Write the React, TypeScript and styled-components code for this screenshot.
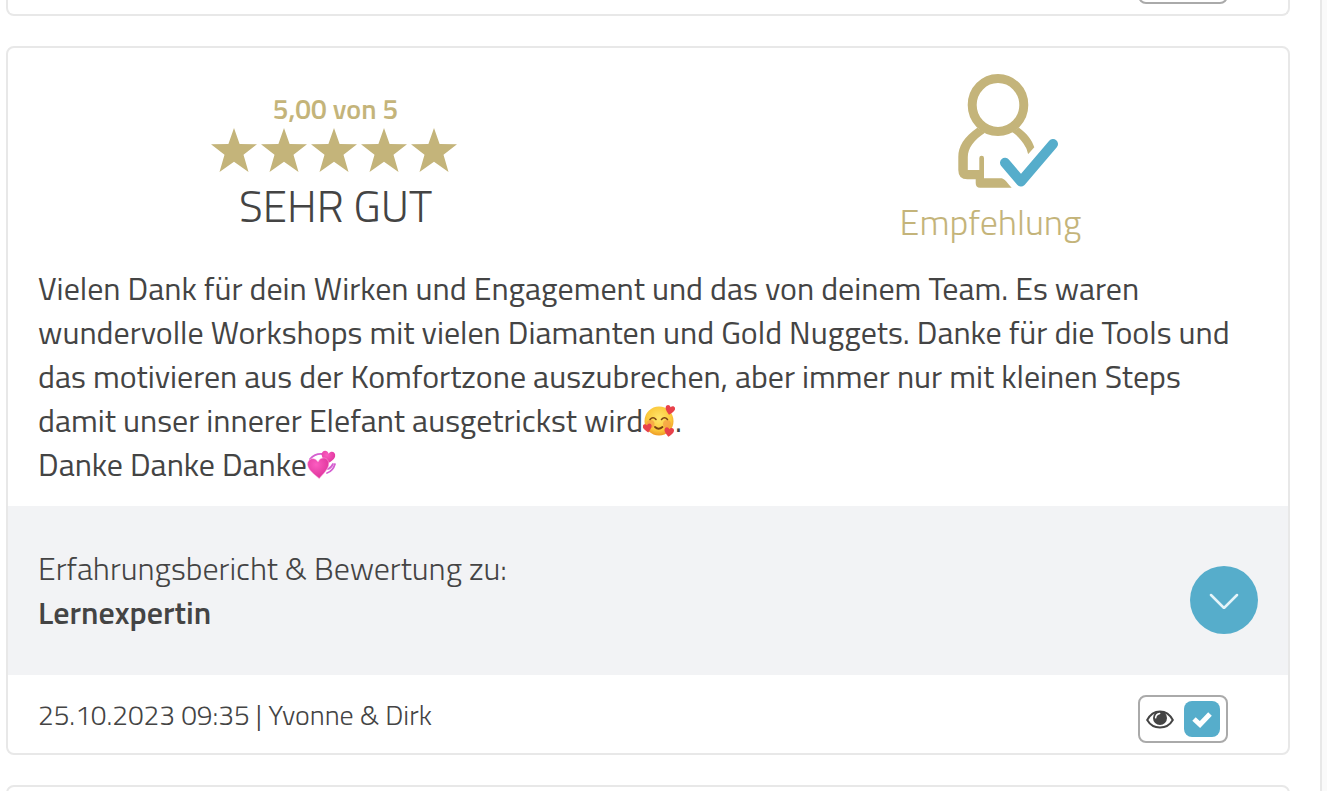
import React from "react";
import styled, { createGlobalStyle } from "styled-components";

const GOLD = "#c4b47a";
const BLUE = "#56adcb";
const INK = "#444444";
const LINE = "#e8e8e8";

const Global = createGlobalStyle`
  * { box-sizing: border-box; }
  html, body { margin: 0; height: 100%; }
  body {
    background: #fafafa;
    color: ${INK};
    font-family: "Titillium Web", Roboto, "Open Sans", sans-serif;
    overflow: hidden;
  }
  p, h2 { margin: 0; }
`;

const Page = styled.main`
  display: flex;
  flex-direction: column;
  gap: 30px;
  height: 100vh;
  margin-right: 5px;
  padding: 0 30px 0 6px;
  background: #fff;
  border-right: 2px solid ${LINE};
  overflow: hidden;
`;

const Card = styled.article`
  flex: none;
  border: 2px solid ${LINE};
  border-radius: 8px;
  background: #fff;
  overflow: hidden;
`;

const PreviousCard = styled(Card)`
  display: flex;
  flex-direction: column;
  justify-content: flex-end;
  height: 16px;
  border-top: 0;
  border-top-left-radius: 0;
  border-top-right-radius: 0;
`;

const NextCard = styled(Card)`
  height: 120px;
`;

const Summary = styled.header`
  display: grid;
  grid-template-columns: 1fr 1fr;
  margin-right: -30px;
  height: 218px;
`;

const Rating = styled.div`
  display: flex;
  flex-direction: column;
  align-items: center;
  padding-top: 45px;
`;

const Score = styled.p`
  font-size: 28px;
  font-weight: 600;
  line-height: 32px;
  color: ${GOLD};
`;

const Stars = styled.svg`
  display: block;
  width: 250px;
  height: 48px;
`;

const Verdict = styled.h2`
  font-size: 44px;
  font-weight: 300;
  line-height: 66px;
`;

const Recommendation = styled.div`
  display: flex;
  flex-direction: column;
  align-items: center;
  padding-top: 24px;
`;

const PersonIcon = styled.svg`
  display: block;
  width: 100px;
  height: 118px;
  margin-left: 35px;
`;

const RecommendationLabel = styled.p`
  font-size: 36px;
  font-weight: 300;
  line-height: 64px;
  color: ${GOLD};
`;

const Review = styled.div`
  padding: 0 30px 20px;
  font-size: 32px;
  line-height: 44px;
`;

const Emoji = styled.svg`
  display: inline-block;
  width: 32px;
  height: 32px;
  vertical-align: -5px;
`;

const Subject = styled.section`
  display: flex;
  align-items: flex-end;
  justify-content: space-between;
  padding: 40px 30px 41px;
  background: #f2f3f5;
  font-size: 32px;
  font-weight: 300;
  line-height: 44px;
`;

const SubjectName = styled.strong`
  display: block;
  font-weight: 600;
`;

const ExpandButton = styled.button`
  display: grid;
  place-items: center;
  width: 68px;
  height: 68px;
  padding: 0;
  border: 0;
  border-radius: 50%;
  background: ${BLUE};
`;

const Footer = styled.footer`
  display: flex;
  align-items: flex-start;
  justify-content: space-between;
  padding: 20px 60px 10px 30px;
  font-size: 28px;
  font-weight: 300;
  line-height: 40px;
`;

const Visibility = styled.label`
  display: flex;
  flex: none;
  align-items: center;
  justify-content: space-between;
  width: 90px;
  height: 48px;
  padding: 0 6px;
  border: 2px solid #aaa;
  border-radius: 8px;
`;

const Check = styled.input`
  appearance: none;
  width: 36px;
  height: 36px;
  margin: 0;
  border-radius: 8px;
  background: ${BLUE};
  grid-area: 1 / 1;
`;

const CheckWrap = styled.span`
  display: grid;
  place-items: center;
  svg { grid-area: 1 / 1; pointer-events: none; z-index: 1; }
`;

const STAR = "22,0 27.6,16 45,16.3 31.5,26.7 36.5,44 22,33.7 7.5,44 12.5,26.7 -1,16.3 16.4,16";

function VisibilityToggle() {
  return (
    <Visibility>
      <svg width="28" height="22" viewBox="0 -1 28 22" aria-hidden="true">
        <path d="M1.2 11 C7 -.5 21 -.5 26.8 11 C21 21 7 21 1.2 11Z" fill="none" stroke={INK} strokeWidth="2" />
        <circle cx="14" cy="9" r="7" fill={INK} />
        <path d="M9.6 8.8 Q10 5 13.7 4.4" fill="none" stroke="#fff" strokeWidth="1.5" strokeLinecap="round" />
      </svg>
      <CheckWrap>
        <Check type="checkbox" defaultChecked aria-label="Sichtbar" />
        <svg width="22" height="18" viewBox="0 0 22 18" aria-hidden="true">
          <path d="M3 9 L9 14.5 L19 4" fill="none" stroke="#fff" strokeWidth="5" />
        </svg>
      </CheckWrap>
    </Visibility>
  );
}

const HEART = "M0 8 C-3 5 -8 1 -8 -3 C-8 -8 -2 -9 0 -4.5 C2 -9 8 -8 8 -3 C8 1 3 5 0 8Z";

function LovingFace() {
  return (
    <Emoji viewBox="0 0 32 32" role="img" aria-label="🥰">
      <defs>
        <radialGradient id="face" cx="50%" cy="40%" r="60%">
          <stop offset="0" stopColor="#ffe56b" />
          <stop offset="0.7" stopColor="#fbc93c" />
          <stop offset="1" stopColor="#ee9b25" />
        </radialGradient>
      </defs>
      <circle cx="16" cy="16" r="14.5" fill="url(#face)" />
      <circle cx="7.5" cy="19" r="4" fill="#f59b45" opacity="0.7" />
      <circle cx="24" cy="19" r="4" fill="#f59b45" opacity="0.7" />
      <path d="M7 14.500 Q10 11 13 14.500 M18.500 14.500 Q21.500 11 24.500 14.500" fill="none" stroke="#7a4213" strokeWidth="1.6" strokeLinecap="round" />
      <path d="M12 22 Q15.5 25.500 19.500 22" fill="none" stroke="#7a4213" strokeWidth="1.8" strokeLinecap="round" />
      <g fill="#e8414a">
        <path d={HEART} transform="translate(27 5) rotate(12) scale(.6)" />
        <path d={HEART} transform="translate(4.5 23) rotate(-10) scale(.56)" />
        <path d={HEART} transform="translate(26 27) rotate(8) scale(.6)" />
      </g>
    </Emoji>
  );
}

function RevolvingHearts() {
  return (
    <Emoji viewBox="0 0 32 32" role="img" aria-label="💞">
      <defs>
        <radialGradient id="heart" cx="40%" cy="30%" r="75%">
          <stop offset="0" stopColor="#fb5cc0" />
          <stop offset="1" stopColor="#dc2f98" />
        </radialGradient>
      </defs>
      <g fill="none" stroke="#d55fd0" strokeWidth="1.8" strokeLinecap="round">
        <path d="M3 10 Q8 4.500 15 5" />
        <path d="M28 15 Q26 22 20 24" />
        <path d="M26 15 Q24 19 21 20" />
      </g>
      <path d={HEART} fill="url(#heart)" transform="translate(21 8.5) rotate(10) scale(.85)" />
      <path d={HEART} fill="url(#heart)" stroke="#f9a0da" strokeWidth=".4" transform="translate(11.500 19) rotate(-4) scale(1.32)" />
    </Emoji>
  );
}

export default function App() {
  return (
    <>
      <Global />
      <Page>
        <PreviousCard>
          <Footer as="div">
            <span />
            <VisibilityToggle />
          </Footer>
        </PreviousCard>

        <Card>
          <Summary>
            <Rating>
              <Score>5,00 von 5</Score>
              <Stars viewBox="0 0 250 48" role="img" aria-label="5 Sterne">
                {[0, 50, 100, 150, 200].map((x) => (
                  <polygon key={x} points={STAR} transform={`translate(${x + 1} 3)`} fill={GOLD} />
                ))}
              </Stars>
              <Verdict>SEHR GUT</Verdict>
            </Rating>
            <Recommendation>
              <PersonIcon viewBox="0 0 100 118" aria-hidden="true">
                <ellipse cx="40" cy="33" rx="25.8" ry="26.5" fill="none" stroke={GOLD} strokeWidth="9" />
                <g fill={GOLD}>
                  <path d="M19.3 55.7 C6 65 0.3 74 0.3 85 V98 Q0.3 107.3 9.3 107.3 H17.7 V111 Q17.7 115.8 22 115.8 H53.7 C50 112 47 107 43.7 106.3 H26 V86 Q26 83.7 23.7 83.7 Q21.3 83.7 21.3 86 V98 H9.8 V85 C9.8 76 16 68 27 60.7Z" />
                  <path d="M61 55.700 C69 61.500 74 68 76.300 75.300 L70.300 82 C69.500 81 69 77 67.500 75 C64.500 69 59 63 53.700 59.700Z" />
                </g>
                <path d="M47 90.7 L63 109.500 L95 72" fill="none" stroke={BLUE} strokeWidth="10" strokeLinecap="round" strokeLinejoin="round" />
              </PersonIcon>
              <RecommendationLabel>Empfehlung</RecommendationLabel>
            </Recommendation>
          </Summary>

          <Review>
            <p>
              Vielen Dank für dein Wirken und Engagement und das von deinem Team. Es waren
              wundervolle Workshops mit vielen Diamanten und Gold Nuggets. Danke für die Tools und
              das motivieren aus der Komfortzone auszubrechen, aber immer nur mit kleinen Steps
              damit unser innerer Elefant ausgetrickst wird
              <LovingFace />.
            </p>
            <p>
              Danke Danke Danke
              <RevolvingHearts />
            </p>
          </Review>

          <Subject>
            <p>
              Erfahrungsbericht &amp; Bewertung zu:
              <SubjectName>Lernexpertin</SubjectName>
            </p>
            <ExpandButton type="button" aria-label="Details anzeigen">
              <svg width="30" height="18" viewBox="0 0 30 18" aria-hidden="true">
                <path d="M2 4 L15 17 L28 4" fill="none" stroke="#e4f4f9" strokeWidth="2.5" strokeLinecap="round" strokeLinejoin="round" />
              </svg>
            </ExpandButton>
          </Subject>

          <Footer>
            <span>25.10.2023 09:35 | Yvonne &amp; Dirk</span>
            <VisibilityToggle />
          </Footer>
        </Card>

        <NextCard aria-hidden="true" />
      </Page>
    </>
  );
}
